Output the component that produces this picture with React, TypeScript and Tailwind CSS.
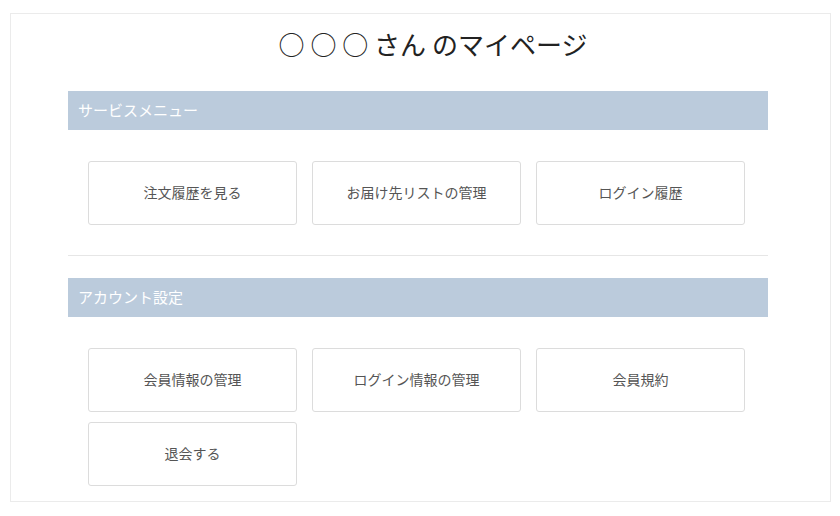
const font = {
  fontFamily: '"Noto Sans CJK JP", "Noto Sans", sans-serif',
};

type Section = {
  title: string;
  links: string[];
};

const sections: Section[] = [
  {
    title: 'サービスメニュー',
    links: ['注文履歴を見る', 'お届け先リストの管理', 'ログイン履歴'],
  },
  {
    title: 'アカウント設定',
    links: ['会員情報の管理', 'ログイン情報の管理', '会員規約', '退会する'],
  },
];

function MenuButton({ label }: { label: string }) {
  return (
    <a
      href="#"
      className="flex h-[64px] items-center justify-center rounded-[3px] border border-[#dcdcdc] bg-white pb-[1px] text-[14px] text-[#555] hover:bg-[#f7f7f7]"
    >
      {label}
    </a>
  );
}

function MenuSection({ section }: { section: Section }) {
  return (
    <section>
      <h2 className="flex h-[39px] items-center bg-[#bbcbdc] pl-[10px] text-[15px] font-normal text-white">
        {section.title}
      </h2>
      <div className="grid grid-cols-[209px_209px_209px] gap-x-[15px] gap-y-[10px] px-[20px] pt-[31px]">
        {section.links.map((link) => (
          <MenuButton key={link} label={link} />
        ))}
      </div>
    </section>
  );
}

export default function App() {
  return (
    <div className="min-h-screen bg-white px-[10px] pt-[13px]" style={font}>
      <div className="h-[489px] w-[821px] border border-[#ebebeb] bg-white pl-[57px]">
        <h1 className="w-[700px] pt-[8px] pb-[25px] pl-[30px] text-center text-[26px] leading-[44px] text-[#222]">
          ○ ○ ○ さん のマイページ
        </h1>
        <div className="w-[700px]">
          <MenuSection section={sections[0]} />
          <hr className="mt-[30px] mb-[22px] border-t border-[#e6e6e6]" />
          <MenuSection section={sections[1]} />
        </div>
      </div>
    </div>
  );
}
